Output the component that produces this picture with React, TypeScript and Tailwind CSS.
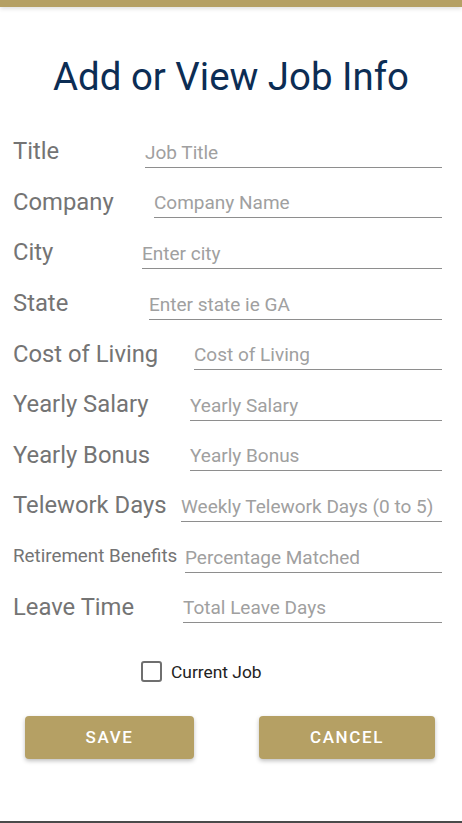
const fields = [
  { label: "Title", placeholder: "Job Title", labelClass: "w-[132px] text-[23.8px]" },
  { label: "Company", placeholder: "Company Name", labelClass: "w-[141px] text-[23.8px]" },
  { label: "City", placeholder: "Enter city", labelClass: "w-[129px] text-[23.8px]" },
  { label: "State", placeholder: "Enter state ie GA", labelClass: "w-[136px] text-[23.8px]" },
  { label: "Cost of Living", placeholder: "Cost of Living", labelClass: "w-[181px] text-[23.8px]" },
  { label: "Yearly Salary", placeholder: "Yearly Salary", labelClass: "w-[177px] text-[23.8px]" },
  { label: "Yearly Bonus", placeholder: "Yearly Bonus", labelClass: "w-[177px] text-[23.8px]" },
  { label: "Telework Days", placeholder: "Weekly Telework Days (0 to 5)", labelClass: "w-[168px] text-[23.8px]" },
  { label: "Retirement Benefits", placeholder: "Percentage Matched", labelClass: "w-[172px] text-[18.8px]" },
  { label: "Leave Time", placeholder: "Total Leave Days", labelClass: "w-[170px] text-[23.8px]" },
];

export default function App() {
  return (
    <div
      className="h-[823px] w-full bg-white flex flex-col border-b-2 border-[#4a4a4a]"
      style={{ fontFamily: "Roboto, 'Noto Sans', sans-serif" }}
    >
      <div className="h-[7px] bg-[#b5a064] shadow-[0_2px_4px_rgba(0,0,0,0.12)]" />

      <h1 className="mt-[50px] text-center text-[38.4px] leading-[40px] text-[#0c2d54]">
        Add or View Job Info
      </h1>

      <div className="mt-[29px] pl-[13px] pr-[20px]">
        {fields.map((f) => (
          <div key={f.label} className="h-[50.6px] flex items-center">
            <span className={`${f.labelClass} shrink-0 leading-[28px] text-[#747474] whitespace-nowrap`}>
              {f.label}
            </span>
            <div className="flex-1 mt-[5px] h-[28px] border-b-[1.5px] border-[#8e8e8e] text-[19px] leading-[26px] text-[#a0a0a0] whitespace-nowrap">
              {f.placeholder}
            </div>
          </div>
        ))}
      </div>

      <div className="mt-[27px] flex items-center gap-[9px] pl-[141px]">
        <div className="w-[21px] h-[21px] rounded-[3px] border-2 border-[#6f6f6f]" />
        <span className="text-[17.4px] text-[#222]">Current Job</span>
      </div>

      <div className="mt-[31px] flex pl-[25px]">
        <button className="w-[169px] h-[43px] rounded-[4px] bg-[#b5a064] text-white text-[17px] font-medium tracking-[1.6px] shadow-[0_2px_4px_rgba(0,0,0,0.25)]">
          SAVE
        </button>
        <button className="ml-[65px] w-[176px] h-[43px] rounded-[4px] bg-[#b5a064] text-white text-[17px] font-medium tracking-[1.6px] shadow-[0_2px_4px_rgba(0,0,0,0.25)]">
          CANCEL
        </button>
      </div>
    </div>
  );
}
